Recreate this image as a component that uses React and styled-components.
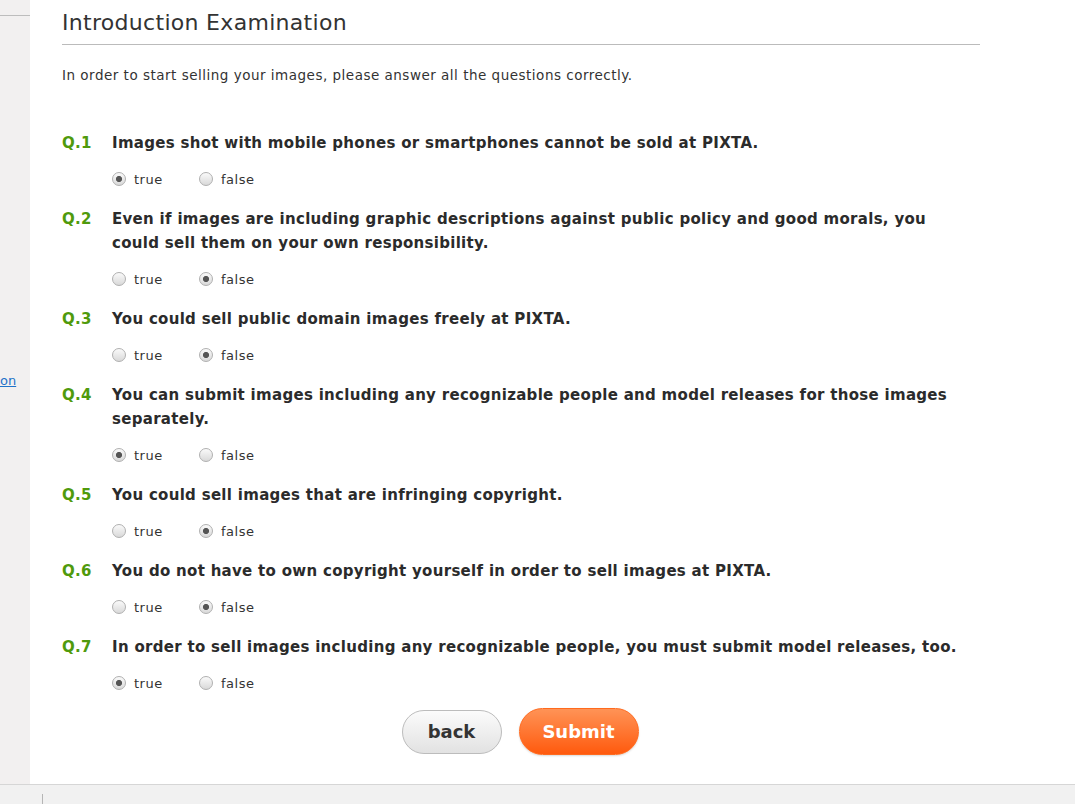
import React from "react";
import styled, { createGlobalStyle } from "styled-components";

const GlobalStyle = createGlobalStyle`
  html, body {
    margin: 0;
    padding: 0;
    background: #fff;
  }
  body {
    font-family: "DejaVu Sans", "Open Sans", sans-serif;
    color: #333;
  }
`;

const questions = [
  { text: "Images shot with mobile phones or smartphones cannot be sold at PIXTA.", answer: true },
  {
    text: "Even if images are including graphic descriptions against public policy and good morals, you could sell them on your own responsibility.",
    answer: false,
  },
  { text: "You could sell public domain images freely at PIXTA.", answer: false },
  {
    text: "You can submit images including any recognizable people and model releases for those images separately.",
    answer: true,
  },
  { text: "You could sell images that are infringing copyright.", answer: false },
  { text: "You do not have to own copyright yourself in order to sell images at PIXTA.", answer: false },
  {
    text: "In order to sell images including any recognizable people, you must submit model releases, too.",
    answer: true,
  },
];

const App = () => {
  return (
    <>
      <GlobalStyle />
      <Page>
        <Body>
          <Sidebar>
            <SideRule />
            <SideLink href="#">on</SideLink>
          </Sidebar>
          <Main>
            <Title>Introduction Examination</Title>
            <Intro>In order to start selling your images, please answer all the questions correctly.</Intro>
            <QuestionList>
              {questions.map((q, i) => (
                <Question key={i}>
                  <QRow>
                    <QNum>Q.{i + 1}</QNum>
                    <QText>{q.text}</QText>
                  </QRow>
                  <Options>
                    <Option>
                      <Radio $checked={q.answer === true} />
                      <span>true</span>
                    </Option>
                    <Option>
                      <Radio $checked={q.answer === false} />
                      <span>false</span>
                    </Option>
                  </Options>
                </Question>
              ))}
            </QuestionList>
            <Buttons>
              <Button>back</Button>
              <Button $primary>Submit</Button>
            </Buttons>
          </Main>
        </Body>
        <Footer>
          <FooterDivider />
        </Footer>
      </Page>
    </>
  );
};

const Page = styled.div`
  display: flex;
  flex-direction: column;
  height: 804px;
  overflow: hidden;
`;

const Body = styled.div`
  display: flex;
  height: 784px;
`;

const Sidebar = styled.aside`
  width: 30px;
  flex-shrink: 0;
  background: #f2f0f0;
  display: flex;
  flex-direction: column;
  overflow: hidden;
`;

const SideRule = styled.div`
  margin-top: 15px;
  height: 1px;
  background: #bdbdbd;
`;

const SideLink = styled.a`
  margin-top: 357px;
  font-size: 13px;
  color: #1f73c9;
  text-decoration: underline;
`;

const Main = styled.main`
  flex: 1;
  padding: 0 95px 0 32px;
`;

const Title = styled.h1`
  margin: 0;
  padding-top: 8px;
  height: 36px;
  line-height: 30px;
  font-size: 22px;
  letter-spacing: 0.3px;
  font-weight: normal;
  color: #333;
  border-bottom: 1px solid #bbb;
`;

const Intro = styled.p`
  margin: 21px 0 0;
  font-size: 13.5px;
  letter-spacing: 0.5px;
  line-height: 18px;
  color: #333;
`;

const QuestionList = styled.div`
  margin-top: 47px;
  display: flex;
  flex-direction: column;
  gap: 16px;
`;

const Question = styled.div`
  display: flex;
  flex-direction: column;
  gap: 12px;
`;

const QRow = styled.div`
  display: flex;
  font-size: 15px;
  letter-spacing: 0.3px;
  font-weight: bold;
  line-height: 24px;
`;

const QNum = styled.span`
  width: 50px;
  flex-shrink: 0;
  color: #4f9a0c;
`;

const QText = styled.span`
  max-width: 862px;
  color: #2b2b2b;
`;

const Options = styled.div`
  display: flex;
  padding-left: 50px;
  height: 24px;
  align-items: center;
`;

const Option = styled.label`
  display: flex;
  align-items: center;
  gap: 8px;
  width: 87px;
  font-size: 13px;
  letter-spacing: 0.5px;
  color: #333;
`;

const Radio = styled.span`
  width: 14px;
  height: 14px;
  box-sizing: border-box;
  border-radius: 50%;
  border: 1px solid #b0b0b0;
  background: ${(p) =>
    p.$checked
      ? "radial-gradient(circle, #555 0 2.8px, transparent 3.2px), linear-gradient(#fafafa, #d9d9d9)"
      : "linear-gradient(#fafafa, #d9d9d9)"};
`;

const Buttons = styled.div`
  margin-top: 13px;
  display: flex;
  justify-content: center;
  align-items: center;
  gap: 17px;
  padding-right: 2px;
`;

const Button = styled.button`
  font-family: inherit;
  font-size: 18px;
  font-weight: bold;
  border-radius: 24px;
  cursor: pointer;
  width: ${(p) => (p.$primary ? "120px" : "100px")};
  height: ${(p) => (p.$primary ? "47px" : "44px")};
  color: ${(p) => (p.$primary ? "#fff" : "#333")};
  border: 1px solid ${(p) => (p.$primary ? "#ff6a1e" : "#bcbcbc")};
  background: ${(p) =>
    p.$primary
      ? "linear-gradient(#ff9356, #ff5a0e)"
      : "linear-gradient(#fbfbfb, #e2e2e2)"};
  box-shadow: ${(p) => (p.$primary ? "0 1px 2px rgba(0,0,0,0.15)" : "none")};
`;

const Footer = styled.footer`
  height: 20px;
  box-sizing: border-box;
  border-top: 1px solid #d6d6d6;
  background: #f1f1f1;
  padding: 9px 0 0 42px;
`;

const FooterDivider = styled.div`
  width: 1px;
  height: 11px;
  background: #b5b5b5;
`;

export default App;
